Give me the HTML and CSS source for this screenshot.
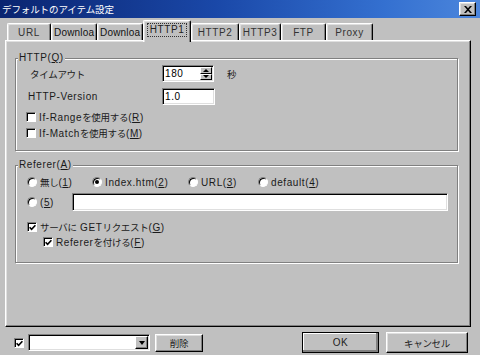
FILE: index.html
```html
<!DOCTYPE html>
<html lang="ja">
<head>
<meta charset="utf-8">
<title>デフォルトのアイテム設定</title>
<link rel="stylesheet" href="styles.css">
</head>
<body>
<div class="window">
  <div class="titlebar">
    <span class="title j">デフォルトのアイテム設定</span>
    <span class="close"><svg width="8" height="7" viewBox="0 0 8 7"><path d="M0 0H2L4 2.2L6 0H8L5 3.5L8 7H6L4 4.8L2 7H0L3 3.5Z" fill="#000"/></svg></span>
  </div>
  <div class="tabs">
    <div class="tab w-url">URL</div>
    <div class="tab w-dl1 clip">Downloa</div>
    <div class="tab w-dl2 clip">Downloa</div>
    <div class="tab sel w-h1"><span class="focus">HTTP1</span></div>
    <div class="tab w-h2">HTTP2</div>
    <div class="tab w-h3">HTTP3</div>
    <div class="tab w-ftp">FTP</div>
    <div class="tab w-proxy">Proxy</div>
  </div>
  <div class="panel">
    <fieldset class="group g-http">
      <legend>HTTP(<u>Q</u>)</legend>
      <div class="gbody http-body">
        <div class="row r-timeout">
          <span class="label j">タイムアウト</span>
          <span class="field spin"><span class="val">180</span><span class="spinbtns"><span class="sb"><i class="tri up"></i></span><span class="sb"><i class="tri down"></i></span></span></span>
          <span class="unit j">秒</span>
        </div>
        <div class="row r-version">
          <span class="label lv">HTTP-Version</span>
          <span class="field ver"><span class="val">1.0</span></span>
        </div>
        <div class="crow c-range">
          <span class="check"></span>
          <span class="ctext">If-Range<span class="j">を使用する</span>(<u>R</u>)</span>
        </div>
        <div class="crow">
          <span class="check"></span>
          <span class="ctext">If-Match<span class="j">を使用する</span>(<u>M</u>)</span>
        </div>
      </div>
    </fieldset>
    <fieldset class="group g-ref">
      <legend>Referer(<u>A</u>)</legend>
      <div class="gbody ref-body">
        <div class="radios">
          <span class="ritem r1"><span class="radio"></span><span class="rtext"><span class="j">無し</span>(<u>1</u>)</span></span>
          <span class="ritem r2"><span class="radio"><span class="dot"></span></span><span class="rtext">Index.htm(<u>2</u>)</span></span>
          <span class="ritem r3"><span class="radio"></span><span class="rtext">URL(<u>3</u>)</span></span>
          <span class="ritem r4"><span class="radio"></span><span class="rtext">default(<u>4</u>)</span></span>
        </div>
        <div class="r5row">
          <span class="ritem r5"><span class="radio"></span><span class="rtext">(<u>5</u>)</span></span>
          <span class="field urlfield"></span>
        </div>
        <div class="crow c-get">
          <span class="check"><svg width="7" height="7" viewBox="0 0 7 7"><path d="M0.6 3.2L2.6 5.3L6.4 1.2" stroke="#000" stroke-width="1.6" fill="none"/></svg></span>
          <span class="ctext"><span class="j">サーバに</span> GET<span class="j">リクエスト</span>(<u>G</u>)</span>
        </div>
        <div class="crow c-refadd">
          <span class="check"><svg width="7" height="7" viewBox="0 0 7 7"><path d="M0.6 3.2L2.6 5.3L6.4 1.2" stroke="#000" stroke-width="1.6" fill="none"/></svg></span>
          <span class="ctext">Referer<span class="j">を付ける</span>(<u>F</u>)</span>
        </div>
      </div>
    </fieldset>
  </div>
  <div class="footer">
    <span class="check"><svg width="7" height="7" viewBox="0 0 7 7"><path d="M0.6 3.2L2.6 5.3L6.4 1.2" stroke="#000" stroke-width="1.6" fill="none"/></svg></span>
    <span class="field combo"><span class="dd"><i class="tri down"></i></span></span>
    <span class="btn del j">削除</span>
    <span class="btn ok">OK</span>
    <span class="btn cancel j">キャンセル</span>
  </div>
</div>
</body>
</html>
```
FILE: styles.css
```css
html, body {
  margin: 0;
  padding: 0;
}
body {
  font-family: "Liberation Sans", "Noto Sans CJK JP", sans-serif;
  font-size: 10px;
  letter-spacing: 0.6px;
  color: #1a1a1a;
  background: #c0c0c0;
}
.j {
  font-family: "Noto Sans CJK JP", sans-serif;
  font-size: 9.5px;
  letter-spacing: -0.3px;
}
u {
  text-decoration: underline;
  text-underline-offset: 1px;
}
.window {
  width: 480px;
  height: 355px;
  background: #c0c0c0;
  overflow: hidden;
}
/* title bar */
.titlebar {
  height: 18px;
  box-sizing: border-box;
  display: flex;
  align-items: center;
  justify-content: space-between;
  padding: 0 4px 0 2px;
  background: linear-gradient(90deg, #0a2470 0%, #1a48a8 45%, #3470d0 80%, #4c86dc 100%);
}
.title {
  color: #fff;
  font-size: 9.5px;
  letter-spacing: -0.1px;
  line-height: 18px;
}
.close {
  width: 17px;
  height: 14px;
  box-sizing: border-box;
  display: flex;
  align-items: center;
  justify-content: center;
  background: #c0c0c0;
  border: 1px solid;
  border-color: #fff #000 #000 #fff;
  box-shadow: inset -1px -1px #808080, inset 1px 1px #dfdfdf;
}
/* tabs */
.tabs {
  display: flex;
  align-items: flex-end;
  height: 22px;
  padding-left: 7px;
}
.tab {
  height: 17px;
  box-sizing: border-box;
  border-top: 1px solid #fff;
  border-left: 1px solid #fff;
  border-right: 1px solid #000;
  box-shadow: inset -1px 0 #808080, inset 1px 1px #dfdfdf;
  border-radius: 2px 2px 0 0;
  display: flex;
  align-items: center;
  justify-content: center;
  color: #333;
  white-space: nowrap;
  overflow: hidden;
}
.tab.clip {
  justify-content: flex-start;
  padding-left: 2px;
  letter-spacing: 0.2px;
  color: #111;
}
.tab.sel {
  height: 22px;
  margin-bottom: -2px;
  position: relative;
  z-index: 2;
  background: #c0c0c0;
  align-items: flex-start;
  padding-top: 2px;
}
.focus {
  border: 1px dotted #333;
  padding: 0 2px;
  line-height: 12px;
  color: #222;
}
.w-url { width: 44px; }
.w-dl1 { width: 46px; }
.w-dl2 { width: 46px; }
.w-h1 { width: 48px; }
.w-h2 { width: 48px; }
.w-h3 { width: 42px; }
.w-ftp { width: 45px; }
.w-proxy { width: 47px; }
/* panel */
.panel {
  margin-left: 5px;
  width: 466px;
  height: 287px;
  box-sizing: border-box;
  border: 1px solid;
  border-color: #fff #000 #000 #fff;
  box-shadow: inset -1px -1px #808080, inset 1px 1px #dfdfdf;
  padding: 11px 0 0 9px;
}
.group {
  margin: 0;
  padding: 0;
  width: 443px;
  box-sizing: border-box;
  border: 1px solid #808080;
  box-shadow: 1px 1px 0 #fff, inset 1px 1px 0 #fff;
  min-inline-size: 0;
}
.group legend {
  padding: 0 1px;
  margin-left: 2px;
  line-height: 12px;
  height: 12px;
  background: #c0c0c0;
  color: #1a1a1a;
}
.g-ref {
  margin-top: 8px;
}
.http-body {
  padding: 0 0 9px 14px;
}
.row {
  display: flex;
  align-items: center;
  height: 17px;
}
.r-timeout { margin-top: 1px; }
.r-version { margin-top: 6px; }
.label { width: 132px; }
.label.lv { margin-left: -2px; width: 134px; }
.unit { margin-left: 13px; }
/* fields */
.field {
  box-sizing: border-box;
  background: #fff;
  border: 1px solid;
  border-color: #808080 #fff #fff #808080;
  box-shadow: inset 1px 1px #000, inset -1px -1px #dfdfdf;
  display: flex;
  align-items: center;
}
.val {
  padding-left: 2px;
  color: #000;
}
.spin {
  width: 52px;
  height: 17px;
  justify-content: space-between;
}
.ver {
  width: 53px;
  height: 17px;
}
.spinbtns {
  display: flex;
  flex-direction: column;
  width: 12px;
  height: 13px;
  margin-right: 1px;
}
.sb {
  flex: 1;
  box-sizing: border-box;
  background: #c0c0c0;
  border: 1px solid;
  border-color: #fff #000 #000 #fff;
  display: flex;
  align-items: center;
  justify-content: center;
}
.tri {
  display: block;
  width: 0;
  height: 0;
  border-left: 3px solid transparent;
  border-right: 3px solid transparent;
}
.tri.up { border-bottom: 3px solid #000; }
.tri.down { border-top: 3px solid #000; }
/* checkboxes */
.crow {
  display: flex;
  align-items: center;
  height: 16px;
}
.c-range { margin-top: 4px; }
.http-body .crow .check { margin-left: -4px; }
.check {
  width: 10px;
  height: 10px;
  box-sizing: border-box;
  background: #fff;
  border: 1px solid;
  border-color: #808080 #fff #fff #808080;
  box-shadow: inset 1px 1px #000;
  display: flex;
  align-items: center;
  justify-content: center;
  flex: none;
}
.check svg { margin: 1px 0 0 1px; }
.ctext {
  margin-left: 3px;
  white-space: nowrap;
}
/* radios */
.ref-body {
  padding: 0 0 13px 11px;
}
.radios {
  display: flex;
  align-items: center;
  height: 14px;
  margin-top: 4px;
}
.ritem {
  display: flex;
  align-items: center;
  white-space: nowrap;
}
.r1 { width: 65px; }
.r2 { width: 96px; }
.r3 { width: 70px; }
.r5 { width: 45px; }
.radio {
  width: 10px;
  height: 10px;
  box-sizing: border-box;
  border-radius: 50%;
  background: #fff;
  border: 1px solid;
  border-color: #808080 #fff #fff #808080;
  box-shadow: inset 1px 1px #000;
  display: flex;
  align-items: center;
  justify-content: center;
  flex: none;
}
.dot {
  width: 4px;
  height: 4px;
  border-radius: 50%;
  background: #000;
}
.rtext { margin-left: 3px; }
.r5row {
  display: flex;
  align-items: center;
  margin-top: 4px;
  height: 18px;
}
.urlfield {
  width: 376px;
  height: 18px;
}
.c-get { margin-top: 8px; height: 15px; }
.c-refadd { height: 15px; padding-left: 16px; }
/* footer */
.footer {
  display: flex;
  align-items: center;
  height: 21px;
  margin-top: 5px;
  padding: 0 12px 0 14px;
}
.combo {
  margin-left: 4px;
  width: 122px;
  height: 17px;
  justify-content: flex-end;
}
.dd {
  width: 13px;
  height: 13px;
  box-sizing: border-box;
  margin-right: 1px;
  background: #c0c0c0;
  border: 1px solid;
  border-color: #fff #000 #000 #fff;
  box-shadow: inset -1px -1px #808080;
  display: flex;
  align-items: center;
  justify-content: center;
}
.dd .tri { border-left-width: 3.5px; border-right-width: 3.5px; border-top-width: 4px; }
.btn {
  box-sizing: border-box;
  display: flex;
  align-items: center;
  justify-content: center;
  background: #c0c0c0;
  border: 1px solid;
  border-color: #fff #000 #000 #fff;
  box-shadow: inset -1px -1px #808080, inset 1px 1px #dfdfdf;
  color: #222;
}
.del {
  margin-left: 5px;
  width: 48px;
  height: 18px;
}
.ok {
  margin-left: auto;
  width: 77px;
  height: 21px;
  border-color: #000;
  box-shadow: inset -2px -2px #808080, inset 1px 1px #fff;
}
.cancel {
  margin-left: 7px;
  width: 82px;
  height: 21px;
}
```
